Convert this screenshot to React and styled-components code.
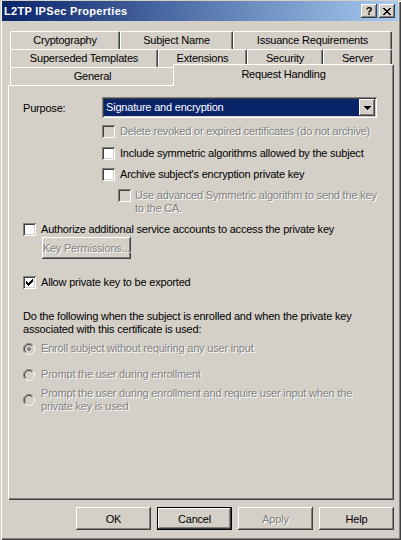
import React from "react";
import styled, { createGlobalStyle } from "styled-components";

const GlobalStyle = createGlobalStyle`
  html, body {
    margin: 0;
    padding: 0;
    background: #d4d0c8;
  }
  body {
    font-family: "Liberation Sans", Tahoma, Arial, sans-serif;
    font-size: 11px;
    letter-spacing: -0.2px;
    color: #000;
  }
`;

// classic 3D edges
const raised = `box-shadow: inset -1px -1px 0 #404040, inset 1px 1px 0 #ffffff, inset -2px -2px 0 #808080, inset 2px 2px 0 #d4d0c8;`;
const sunken = `box-shadow: inset 1px 1px 0 #808080, inset -1px -1px 0 #ffffff, inset 2px 2px 0 #404040, inset -2px -2px 0 #d4d0c8;`;

const Window = styled.div`
  width: 401px;
  height: 540px;
  box-sizing: border-box;
  padding: 1px 3px 3px 2px;
  background: #d4d0c8;
  box-shadow: inset 1px 1px 0 #d4d0c8, inset 2px 2px 0 #ffffff, inset -1px -1px 0 #404040, inset -2px -2px 0 #808080;
  display: flex;
  flex-direction: column;
`;

const TitleBar = styled.div`
  height: 20px;
  display: flex;
  align-items: center;
  padding: 0 3px 0 2px;
  background: linear-gradient(to right, #0a246a, #a6caf0);
  color: #fff;
  font-weight: bold;
  font-size: 11px;
  letter-spacing: 0.3px;
`;

const Title = styled.div`
  flex: 1;
  white-space: nowrap;
`;

const CaptionButton = styled.div`
  width: 16px;
  height: 14px;
  margin-left: ${p => p.$gap || 0}px;
  background: #d4d0c8;
  ${raised}
  display: flex;
  align-items: center;
  justify-content: center;
  color: #000;
  font-size: 11px;
  font-weight: bold;
  line-height: 14px;
  letter-spacing: 0;
`;

const Body = styled.div`
  flex: 1;
  display: flex;
  flex-direction: column;
  padding: 10px 4px 0 6px;
`;

const TabRow = styled.div`
  display: flex;
  align-items: flex-end;
  height: 18px;
  margin: 0 2px;
`;

const Tab = styled.div`
  box-sizing: border-box;
  flex: ${p => (p.$w ? `0 0 ${p.$w}px` : "1")};
  height: ${p => (p.$active ? 22 : 18)}px;
  margin: ${p => (p.$active ? "0 -2px -1px -2px" : "0")};
  position: ${p => (p.$active ? "relative" : "static")};
  z-index: ${p => (p.$active ? 1 : "auto")};
  background: #d4d0c8;
  border-top: 1px solid #fff;
  border-left: 1px solid #fff;
  border-right: 1px solid #404040;
  border-radius: 2px 2px 0 0;
  box-shadow: inset -1px 0 0 #808080;
  text-align: center;
  line-height: 17px;
  padding-top: ${p => (p.$active ? 1 : 0)}px;
  white-space: nowrap;
`;

const Panel = styled.div`
  height: 415px;
  box-sizing: border-box;
  background: #d4d0c8;
  box-shadow: inset 1px 1px 0 #ffffff, inset -1px -1px 0 #404040, inset -2px -2px 0 #808080;
  padding: 12px 0 0 15px;
  display: flex;
  flex-direction: column;
`;

const PurposeRow = styled.div`
  display: flex;
  align-items: center;
  height: 21px;
`;

const FieldLabel = styled.span`
  flex: 0 0 79px;
`;

const Combo = styled.div`
  width: 275px;
  height: 21px;
  box-sizing: border-box;
  padding: 2px;
  background: #fff;
  ${sunken}
  display: flex;
`;

const ComboValue = styled.div`
  flex: 1;
  background: #0a246a;
  color: #fff;
  padding-left: 2px;
  line-height: 17px;
`;

const ComboArrow = styled.div`
  width: 16px;
  height: 17px;
  background: #d4d0c8;
  ${raised}
  display: flex;
  align-items: center;
  justify-content: center;
`;

const Row = styled.div`
  display: flex;
  align-items: ${p => (p.$center ? "center" : "flex-start")};
  gap: ${p => p.$gap || 5}px;
  margin-top: ${p => p.$mt || 0}px;
  margin-left: ${p => p.$indent || 0}px;
`;

const Label = styled.span`
  line-height: 13px;
  white-space: nowrap;
  color: ${p => (p.$disabled ? "#808080" : "#000")};
  text-shadow: ${p => (p.$disabled ? "1px 1px 0 #fff" : "none")};
`;

const Box = styled.span`
  flex: 0 0 13px;
  width: 13px;
  height: 13px;
  background: ${p => (p.$disabled ? "#d4d0c8" : "#fff")};
  ${sunken}
`;

const PushButton = styled.div`
  box-sizing: border-box;
  width: ${p => p.$w || 75}px;
  height: ${p => p.$h || 23}px;
  margin-top: ${p => p.$mt || 0}px;
  margin-left: ${p => p.$indent || 0}px;
  background: #d4d0c8;
  ${raised}
  border: ${p => (p.$default ? "1px solid #000" : "none")};
  display: flex;
  align-items: center;
  justify-content: center;
  color: ${p => (p.$disabled ? "#808080" : "#000")};
  text-shadow: ${p => (p.$disabled ? "1px 1px 0 #fff" : "none")};
  white-space: nowrap;
`;

const Paragraph = styled.div`
  margin-top: ${p => p.$mt || 0}px;
  line-height: 13px;
`;

const ButtonBar = styled.div`
  display: flex;
  justify-content: flex-end;
  gap: 6px;
  margin-top: 7px;
`;

function Checkbox({ checked, disabled }) {
  return (
    <Box $disabled={disabled}>
      {checked && (
        <svg width="13" height="13" viewBox="0 0 13 13" shapeRendering="crispEdges">
          <path
            fill="#000"
            d="M9 3h1v1h-1z M8 4h2v1h-2z M3 5h1v1h-1z M7 5h3v1h-3z M3 6h2v1h-2z M6 6h3v1h-3z M3 7h5v1h-5z M4 8h3v1h-3z M5 9h1v1h-1z"
          />
        </svg>
      )}
    </Box>
  );
}

function Radio({ checked, disabled }) {
  const fill = disabled ? "#d4d0c8" : "#fff";
  return (
    <svg width="12" height="12" viewBox="0 0 12 12" style={{ flex: "0 0 12px" }}>
      <circle cx="6" cy="6" r="5" fill={fill} />
      <path d="M2.1 9.9 A5.5 5.5 0 0 1 9.9 2.1" fill="none" stroke="#808080" strokeWidth="1" />
      <path d="M9.9 2.1 A5.5 5.5 0 0 1 2.1 9.9" fill="none" stroke="#ffffff" strokeWidth="1" />
      <path d="M2.8 9.2 A4.5 4.5 0 0 1 9.2 2.8" fill="none" stroke="#404040" strokeWidth="1" />
      <path d="M9.2 2.8 A4.5 4.5 0 0 1 2.8 9.2" fill="none" stroke="#d4d0c8" strokeWidth="1" />
      {checked && <circle cx="6" cy="6" r="2" fill={disabled ? "#808080" : "#000"} />}
    </svg>
  );
}

export default function App() {
  return (
    <>
      <GlobalStyle />
      <Window>
        <TitleBar>
          <Title>L2TP IPSec Properties</Title>
          <CaptionButton>?</CaptionButton>
          <CaptionButton $gap={2}>
            <svg width="8" height="7" viewBox="0 0 8 7" shapeRendering="crispEdges">
              <path
                fill="#000"
                d="M0 0h2v1h-2z M6 0h2v1h-2z M1 1h2v1h-2z M5 1h2v1h-2z M2 2h4v1h-4z M3 3h2v1h-2z M2 4h4v1h-4z M1 5h2v1h-2z M5 5h2v1h-2z M0 6h2v1h-2z M6 6h2v1h-2z"
              />
            </svg>
          </CaptionButton>
        </TitleBar>

        <Body>
          <TabRow>
            <Tab $w={110}>Cryptography</Tab>
            <Tab $w={113}>Subject Name</Tab>
            <Tab>Issuance Requirements</Tab>
          </TabRow>
          <TabRow>
            <Tab $w={148}>Superseded Templates</Tab>
            <Tab $w={89}>Extensions</Tab>
            <Tab $w={76}>Security</Tab>
            <Tab>Server</Tab>
          </TabRow>
          <TabRow>
            <Tab $w={165}>General</Tab>
            <Tab $active>Request Handling</Tab>
          </TabRow>

          <Panel>
            <PurposeRow>
              <FieldLabel>Purpose:</FieldLabel>
              <Combo>
                <ComboValue>Signature and encryption</ComboValue>
                <ComboArrow>
                  <svg width="7" height="4" viewBox="0 0 7 4" shapeRendering="crispEdges">
                    <path fill="#000" d="M0 0h7v1h-7z M1 1h5v1h-5z M2 2h3v1h-3z M3 3h1v1h-1z" />
                  </svg>
                </ComboArrow>
              </Combo>
            </PurposeRow>

            <Row $mt={7} $indent={79}>
              <Checkbox disabled />
              <Label $disabled>Delete revoked or expired certificates (do not archive)</Label>
            </Row>
            <Row $mt={9} $indent={79}>
              <Checkbox />
              <Label>Include symmetric algorithms allowed by the subject</Label>
            </Row>
            <Row $mt={8} $indent={79}>
              <Checkbox />
              <Label>Archive subject's encryption private key</Label>
            </Row>
            <Row $mt={8} $indent={95} $gap={4}>
              <Checkbox disabled />
              <Label $disabled>
                Use advanced Symmetric algorithm to send the key
                <br />
                to the CA.
              </Label>
            </Row>

            <Row $mt={8}>
              <Checkbox />
              <Label>Authorize additional service accounts to access the private key</Label>
            </Row>
            <PushButton $w={89} $h={22} $mt={1} $indent={19} $disabled>
              Key Permissions...
            </PushButton>

            <Row $mt={17}>
              <Checkbox checked />
              <Label>Allow private key to be exported</Label>
            </Row>

            <Paragraph $mt={21}>
              Do the following when the subject is enrolled and when the private key
              <br />
              associated with this certificate is used:
            </Paragraph>

            <Row $mt={6} $gap={6} $center>
              <Radio checked disabled />
              <Label $disabled>Enroll subject without requiring any user input</Label>
            </Row>
            <Row $mt={13} $gap={6} $center>
              <Radio disabled />
              <Label $disabled>Prompt the user during enrollment</Label>
            </Row>
            <Row $mt={6} $gap={6} $center>
              <Radio disabled />
              <Label $disabled>
                Prompt the user during enrollment and require user input when the
                <br />
                private key is used
              </Label>
            </Row>
          </Panel>

          <ButtonBar>
            <PushButton>OK</PushButton>
            <PushButton $default>Cancel</PushButton>
            <PushButton $disabled>Apply</PushButton>
            <PushButton>Help</PushButton>
          </ButtonBar>
        </Body>
      </Window>
    </>
  );
}
